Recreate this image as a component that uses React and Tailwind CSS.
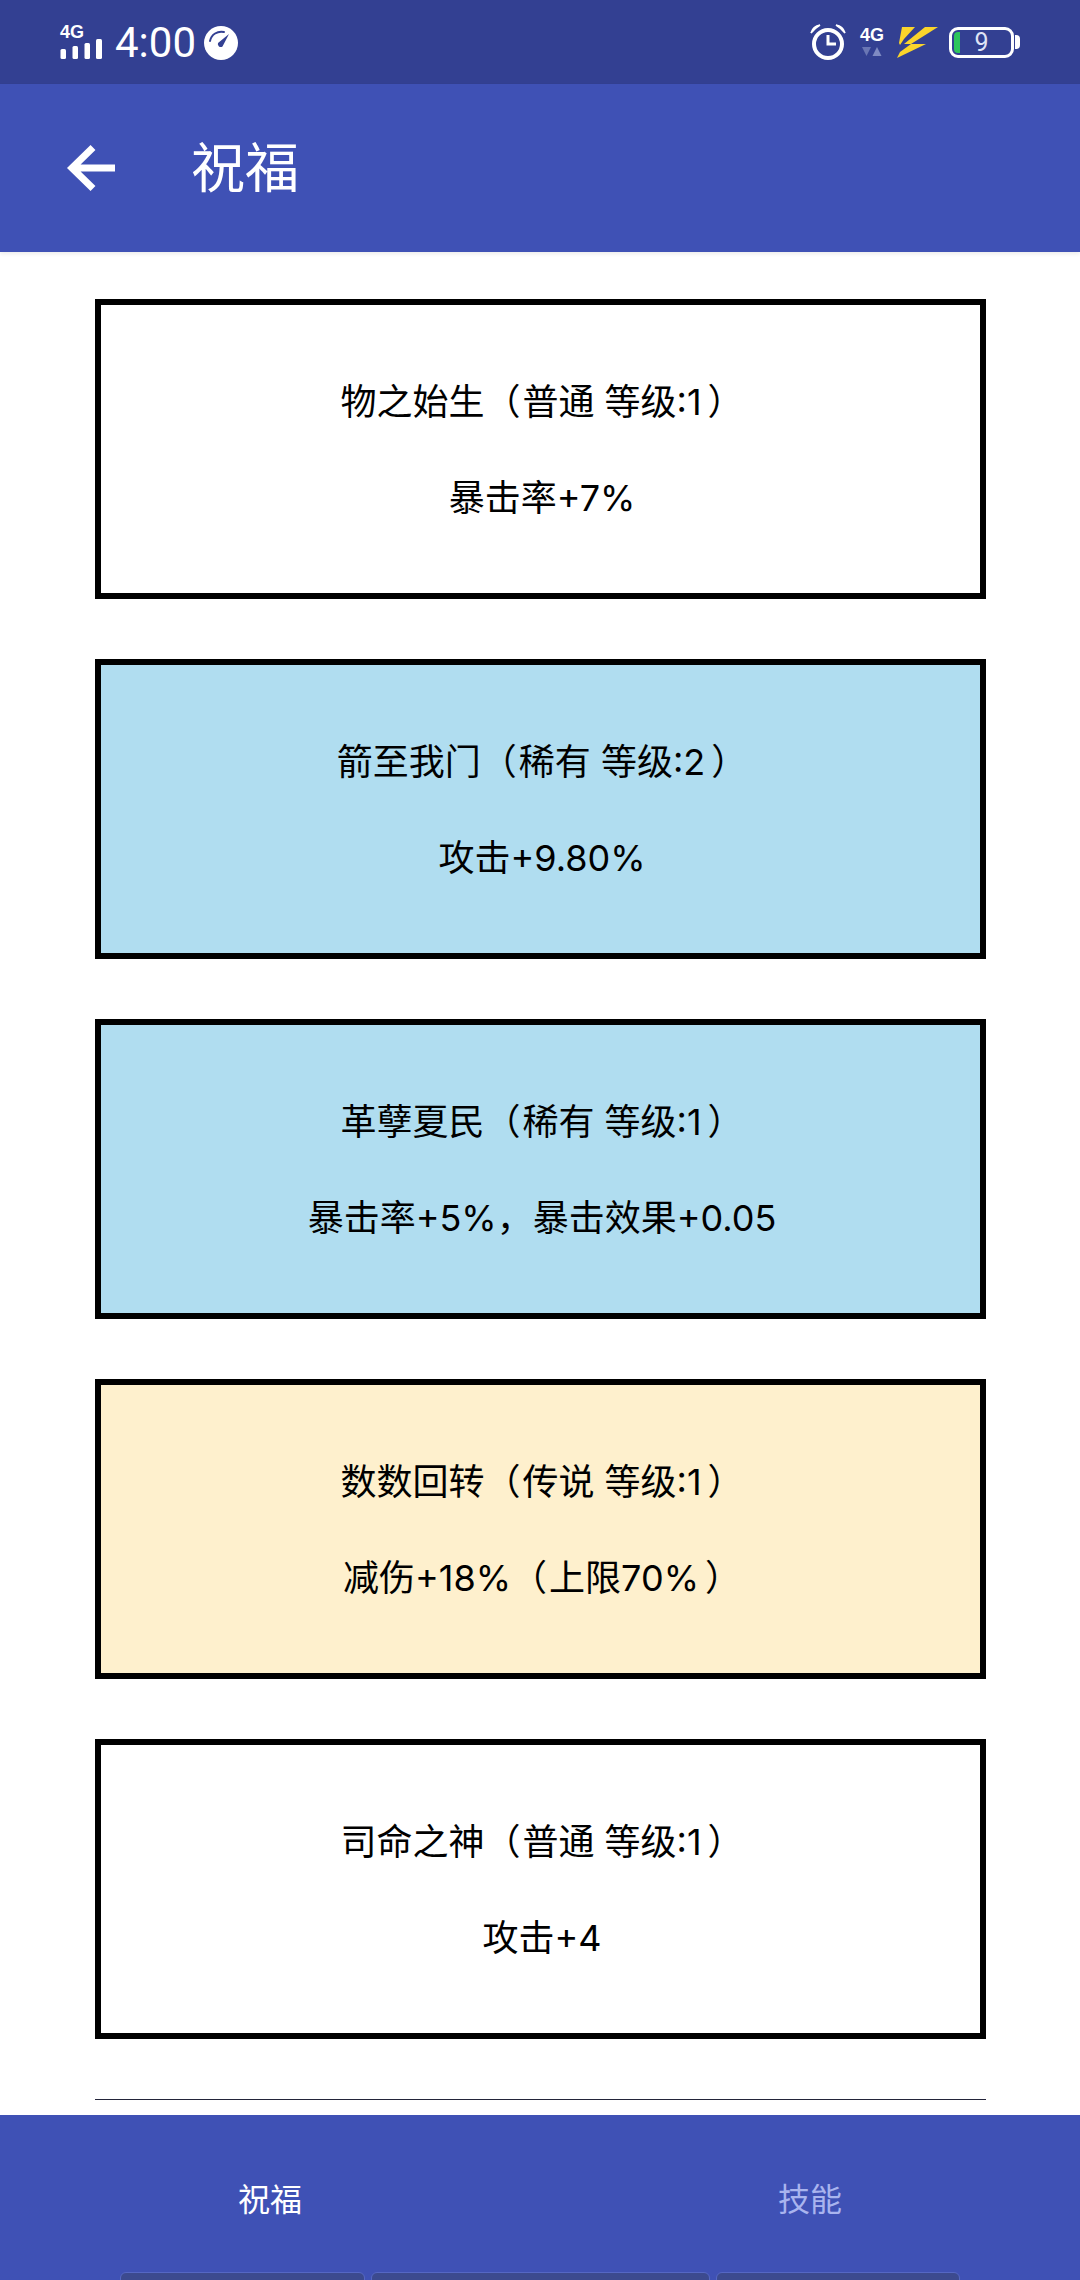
const font = { fontFamily: '"Roboto", "Noto Sans CJK SC", sans-serif' };
const cardFont = { fontFamily: '"Inter", "Noto Sans CJK SC", sans-serif' };

const cards = [
  { t: "物之始生（普通 等级:1）", d: "暴击率+7%", bg: "bg-white" },
  { t: "箭至我门（稀有 等级:2）", d: "攻击+9.80%", bg: "bg-[#b0ddf0]" },
  { t: "革孽夏民（稀有 等级:1）", d: "暴击率+5%，暴击效果+0.05", bg: "bg-[#b0ddf0]" },
  { t: "数数回转（传说 等级:1）", d: "减伤+18%（上限70%）", bg: "bg-[#fef0cd]" },
  { t: "司命之神（普通 等级:1）", d: "攻击+4", bg: "bg-white" },
];

function Line({ text }) {
  return (
    <p className="pl-[3px] text-[36px] leading-[43px] text-black">
      {text.split(/([（）])/).map((s, i) =>
        s === "（" ? (
          <span key={i} className="pr-[2px]">{s}</span>
        ) : s === "）" ? (
          <span key={i} className="pl-[6px]">{s}</span>
        ) : (
          <span key={i}>{s}</span>
        )
      )}
    </p>
  );
}

function Signal() {
  return (
    <div className="relative w-[43px] h-[36px]">
      <span className="absolute left-0 top-[-2px] text-[18px] leading-[18px] font-bold text-white" style={{ fontFamily: '"Liberation Sans", sans-serif' }}>4G</span>
      <svg className="absolute left-0 top-0" width="43" height="36" viewBox="0 0 43 36">
        <rect x="0.5" y="24" width="5.500" height="10" rx="1.500" fill="#fff" />
        <rect x="12.500" y="21" width="5.500" height="13" rx="1.500" fill="#fff" />
        <rect x="24.500" y="18" width="5.500" height="16" rx="1.500" fill="#fff" />
        <rect x="36" y="14" width="6" height="20" rx="1.500" fill="#fff" />
      </svg>
    </div>
  );
}

function Gauge() {
  return (
    <svg width="34" height="34" viewBox="0 0 34 34">
      <circle cx="17" cy="17" r="17" fill="#fff" />
      <path d="M6 15 A11.500 11.500 0 0 1 20 6" fill="none" stroke="#334092" strokeWidth="2" strokeLinecap="round" />
      <path d="M25 8 L18.500 20.500 A3 3 0 0 1 14 17 Z" fill="#334092" />
    </svg>
  );
}

function Alarm() {
  return (
    <svg width="36" height="36" viewBox="0 0 36 36">
      <circle cx="18" cy="20" r="14" fill="none" stroke="#fff" strokeWidth="4" />
      <path d="M18 11 V20 H26" fill="none" stroke="#fff" strokeWidth="3" />
      <path d="M1 9 Q3 2 10 1 Q5 4 1 9 Z M35 9 Q33 2 26 1 Q31 4 35 9 Z" fill="#fff" stroke="#fff" strokeWidth="1.500" />
    </svg>
  );
}

function Net() {
  return (
    <div className="flex flex-col items-center w-[24px]">
      <span className="text-[18px] leading-[15px] font-bold text-white" style={{ fontFamily: '"Liberation Sans", sans-serif' }}>4G</span>
      <svg className="mt-[4px]" width="20" height="10" viewBox="0 0 20 10">
        <path d="M0 0 H9 L4.500 9 Z" fill="#6a76b4" />
        <path d="M10.500 9 H19.500 L15 0 Z" fill="#7f8ac2" />
      </svg>
    </div>
  );
}

function Bolt() {
  return (
    <svg width="42" height="31" viewBox="0 0 42 31">
      <path d="M5 0 H18 L7 12 L3 18 L2 16 Z" fill="#fbd52b" />
      <path d="M41 0 H28 L7 17 H14 Z" fill="#fbd52b" />
      <path d="M29 17 H14 L3 25 L0 31 Z" fill="#fbd52b" />
    </svg>
  );
}

function Battery() {
  return (
    <div className="flex items-center">
      <div className="relative flex h-[31px] w-[65px] items-center justify-center rounded-[9px] border-[3px] border-white">
        <div className="absolute left-[2px] top-[2px] bottom-[2px] w-[6px] rounded-l-[4px] bg-[#2ec55c]" />
        <span className="text-[25px] leading-none text-[#dfe3f5]">9</span>
      </div>
      <div className="ml-[1px] h-[14px] w-[5px] rounded-r-[4px] bg-white" />
    </div>
  );
}

function StatusBar() {
  return (
    <div className="flex h-[84px] items-center justify-between bg-[#334092] pl-[60px] pr-[60px]">
      <div className="flex items-center pt-[2px]">
        <Signal />
        <span className="ml-[12px] text-[42px] leading-none text-white">4:00</span>
        <div className="ml-[8px]"><Gauge /></div>
      </div>
      <div className="flex items-center">
        <Alarm />
        <div className="ml-[14px]"><Net /></div>
        <div className="ml-[13px]"><Bolt /></div>
        <div className="ml-[10px]"><Battery /></div>
      </div>
    </div>
  );
}

function Toolbar() {
  return (
    <div className="flex h-[168px] items-center bg-[#3f51b5] pl-[66px] shadow-[0_2px_4px_rgba(0,0,0,0.08)]">
      <svg width="50" height="48" viewBox="0 0 50 48">
        <path d="M49 24 H6 M27 3.500 L6 24 L27 44.500" fill="none" stroke="#fff" strokeWidth="7" />
      </svg>
      <span className="ml-[75px] pt-[4px] text-[54px] leading-none text-white">祝福</span>
    </div>
  );
}

export default function App() {
  return (
    <div className="flex h-[2280px] w-[1080px] flex-col overflow-hidden bg-white" style={font}>
      <StatusBar />
      <Toolbar />
      <main className="flex-1 pl-[95px] pr-[94px] pt-[47px]">
        <div className="flex flex-col gap-[60px]">
          {cards.map((c) => (
            <div key={c.t} style={cardFont} className={`flex h-[300px] flex-col items-center justify-center gap-[53px] border-[6px] border-black pt-[3px] ${c.bg}`}>
              <Line text={c.t} />
              <Line text={c.d} />
            </div>
          ))}
        </div>
        <div className="mt-[60px] h-[1px] bg-[#23253a]" />
      </main>
      <footer className="bg-[#3f51b5]">
        <div className="flex h-[157px] items-center pt-[12px]">
          <div className="flex-1 text-center text-[32px] text-white">祝福</div>
          <div className="flex-1 text-center text-[32px] text-[#a9b4ee]">技能</div>
        </div>
        <div className="flex h-[8px] gap-[6px] pl-[120px]">
          <div className="h-[20px] w-[245px] rounded-[6px] border border-[#5567c4] bg-[#3c4a8f]" />
          <div className="h-[20px] w-[339px] rounded-[6px] border border-[#5567c4] bg-[#3c4a8f]" />
          <div className="h-[20px] w-[244px] rounded-[6px] border border-[#5567c4] bg-[#3c4a8f]" />
        </div>
      </footer>
    </div>
  );
}
